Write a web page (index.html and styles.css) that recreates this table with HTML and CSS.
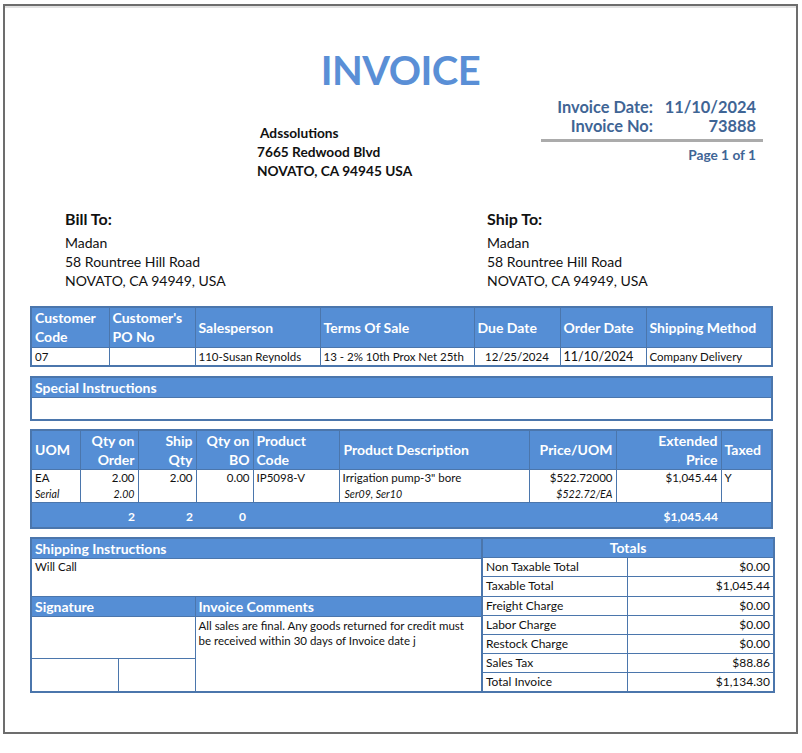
FILE: index.html
```html
<!DOCTYPE html>
<html lang="en">
<head>
<meta charset="utf-8">
<title>Invoice 73888</title>
<link rel="stylesheet" href="styles.css">
</head>
<body>
<div class="page">
  <h1 class="title">INVOICE</h1>
  <div class="head">
    <div class="company">
      <div class="company-name">Adssolutions</div>
      <div>7665 Redwood Blvd</div>
      <div>NOVATO, CA 94945 USA</div>
    </div>
    <div class="meta">
      <div class="meta-grid">
        <span class="meta-label">Invoice Date:</span><span class="meta-value">11/10/2024</span>
        <span class="meta-label">Invoice No:</span><span class="meta-value">73888</span>
      </div>
      <div class="meta-page">Page 1 of 1</div>
    </div>
  </div>

  <div class="addresses">
    <div class="addr addr-bill">
      <div class="addr-title">Bill To:</div>
      <div>Madan</div>
      <div>58 Rountree Hill Road</div>
      <div>NOVATO, CA 94949, USA</div>
    </div>
    <div class="addr">
      <div class="addr-title">Ship To:</div>
      <div>Madan</div>
      <div>58 Rountree Hill Road</div>
      <div>NOVATO, CA 94949, USA</div>
    </div>
  </div>

  <table class="grid cust">
    <colgroup>
      <col style="width:78px"><col style="width:86px"><col style="width:125px"><col style="width:154px"><col style="width:86px"><col style="width:86px"><col style="width:126px">
    </colgroup>
    <tr class="hdr2">
      <th>Customer<br>Code</th>
      <th>Customer's<br>PO No</th>
      <th>Salesperson</th>
      <th>Terms Of Sale</th>
      <th>Due Date</th>
      <th>Order Date</th>
      <th>Shipping Method</th>
    </tr>
    <tr class="cust-data">
      <td>07</td>
      <td></td>
      <td>110-Susan Reynolds</td>
      <td>13 - 2% 10th Prox Net 25th</td>
      <td class="center">12/25/2024</td>
      <td class="big">11/10/2024</td>
      <td>Company Delivery</td>
    </tr>
  </table>

  <table class="grid special">
    <colgroup><col style="width:741px"></colgroup>
    <tr><th class="hdr1">Special Instructions</th></tr>
    <tr><td class="special-body"></td></tr>
  </table>

  <table class="grid items">
    <colgroup>
      <col style="width:49px"><col style="width:58px"><col style="width:58px"><col style="width:57px"><col style="width:86px"><col style="width:190px"><col style="width:87px"><col style="width:105px"><col style="width:51px">
    </colgroup>
    <tr class="hdr2">
      <th>UOM</th>
      <th class="right">Qty on<br>Order</th>
      <th class="right">Ship<br>Qty</th>
      <th class="right">Qty on<br>BO</th>
      <th>Product<br>Code</th>
      <th class="desc-h">Product Description</th>
      <th class="right">Price/UOM</th>
      <th class="right">Extended<br>Price</th>
      <th>Taxed</th>
    </tr>
    <tr class="item">
      <td><div>EA</div><div class="sub">Serial</div></td>
      <td class="right"><div>2.00</div><div class="sub">2.00</div></td>
      <td class="right"><div>2.00</div></td>
      <td class="right"><div>0.00</div></td>
      <td><div>IP5098-V</div></td>
      <td class="desc"><div>Irrigation pump-3" bore</div><div class="sub sub-in">Ser09, Ser10</div></td>
      <td class="right"><div>$522.72000</div><div class="sub">$522.72/EA</div></td>
      <td class="right"><div>$1,045.44</div></td>
      <td><div>Y</div></td>
    </tr>
    <tr class="sum">
      <td></td>
      <td class="right">2</td>
      <td class="right">2</td>
      <td class="right sum-bo">0</td>
      <td></td>
      <td></td>
      <td></td>
      <td class="right">$1,045.44</td>
      <td></td>
    </tr>
  </table>

  <div class="bottom">
    <table class="grid left">
      <colgroup>
        <col style="width:87px"><col style="width:77px"><col style="width:287px">
      </colgroup>
      <tr><th colspan="3" class="hdr1">Shipping Instructions</th></tr>
      <tr><td colspan="3" class="ship-body">Will Call</td></tr>
      <tr><th colspan="2" class="hdr1">Signature</th><th class="hdr1">Invoice Comments</th></tr>
      <tr><td colspan="2" class="sig-box"></td><td rowspan="2" class="comments">All sales are final. Any goods returned for credit must be received within 30 days of Invoice date j</td></tr>
      <tr><td class="sig-small"></td><td class="sig-small"></td></tr>
    </table>
    <table class="grid totals">
      <colgroup>
        <col style="width:145px"><col style="width:147px">
      </colgroup>
      <tr><th colspan="2" class="hdr1 center">Totals</th></tr>
      <tr><td>Non Taxable Total</td><td class="right">$0.00</td></tr>
      <tr><td>Taxable Total</td><td class="right">$1,045.44</td></tr>
      <tr><td>Freight Charge</td><td class="right">$0.00</td></tr>
      <tr><td>Labor Charge</td><td class="right">$0.00</td></tr>
      <tr><td>Restock Charge</td><td class="right">$0.00</td></tr>
      <tr><td>Sales Tax</td><td class="right">$88.86</td></tr>
      <tr><td>Total Invoice</td><td class="right">$1,134.30</td></tr>
    </table>
  </div>
</div>
</body>
</html>
```
FILE: styles.css
```css
* { box-sizing: border-box; }
html, body { margin: 0; padding: 0; background: #ffffff; }
body {
  font-family: Lato, "Liberation Sans", sans-serif;
  color: #111111;
}
.page {
  margin: 4px 0 0 3px;
  width: 795px;
  height: 730px;
  border: 2px solid #6d6d6d;
  box-shadow: inset 0 2px 0 #e2e2e2, 0 2px 0 #dedede;
  padding-top: 40px;
}
.title {
  margin: 0;
  text-align: center;
  font-size: 40px;
  line-height: 48px;
  font-weight: 700;
  color: #5a8fd6;
  letter-spacing: -0.5px;
}
.head {
  display: flex;
  justify-content: space-between;
  margin-top: 2px;
}
.company {
  margin-left: 252px;
  padding-top: 27px;
  font-size: 13.7px;
  font-weight: 700;
  line-height: 19px;
}
.company-name { padding-left: 3px; }
.meta {
  width: 222px;
  margin-right: 33px;
  color: #3f6595;
  font-weight: 700;
}
.meta-grid {
  display: grid;
  grid-template-columns: 112px 1fr;
  font-size: 16.4px;
  line-height: 19px;
  padding-top: 1px;
  padding-right: 7px;
  padding-bottom: 4px;
  border-bottom: 3px solid #ababab;
}
.meta-label, .meta-value { text-align: right; }
.meta-page {
  text-align: right;
  padding-right: 7px;
  padding-top: 5px;
  font-size: 13.7px;
  line-height: 16px;
}
.addresses {
  display: flex;
  margin-top: 29px;
  padding-left: 60px;
  font-size: 14px;
  line-height: 19px;
}
.addr-bill { width: 422px; }
.addr-title {
  font-size: 16px;
  font-weight: 700;
  line-height: 20px;
  margin-bottom: 4px;
}

.grid {
  border-collapse: collapse;
  table-layout: fixed;
  width: 741px;
  margin-left: 25px;
  border: 2px solid #4b76ac;
  font-size: 11.5px;
}
.grid th, .grid td {
  border: 1.5px solid #4b76ac;
  padding: 0 3px;
  text-align: left;
  vertical-align: middle;
}
.grid th {
  background: #558ed5;
  color: #ffffff;
  font-weight: 700;
  font-size: 14px;
  line-height: 19px;
}
.hdr2 th { height: 40px; }
.hdr1 { height: 20px; }
.right { text-align: right !important; }
.center { text-align: center !important; }

.cust { margin-top: 16px; }
.cust-data td { height: 19px; font-size: 11.5px; }
.cust-data td.big { font-size: 12.6px; }
.special { margin-top: 9px; }
.special-body { height: 22px; }

.items { margin-top: 8px; }
.items .desc-h { padding-left: 4px; }
.item td {
  vertical-align: top;
  height: 33px;
  padding-top: 0;
  line-height: 16px;
}
.item .desc { padding-left: 3px; }
.sub {
  font-style: italic;
  font-size: 10.6px;
  line-height: 16px;
}
.sub-in { padding-left: 2px; }
.sum td {
  background: #558ed5;
  color: #ffffff;
  font-weight: 700;
  font-size: 12px;
  height: 25px;
  border-left: none;
  border-right: none;
  padding-top: 3px;
}
.sum td.sum-bo { padding-right: 7px; }

.bottom {
  display: flex;
  margin-top: 8px;
  margin-left: 25px;
  width: 743px;
}
.bottom .grid { margin-left: 0; }
.left { width: 451px; }
.totals { width: 292px; margin-left: -2px !important; font-size: 12px; }
.ship-body { height: 38px; vertical-align: top !important; line-height: 15px; }
.sig-box { height: 42px; }
.sig-small { height: 34px; }
.comments {
  vertical-align: top !important;
  line-height: 15px;
  padding-top: 1px !important;
}
.totals td { height: 19px; line-height: 16px; }
.totals th { line-height: 18px; }
```
